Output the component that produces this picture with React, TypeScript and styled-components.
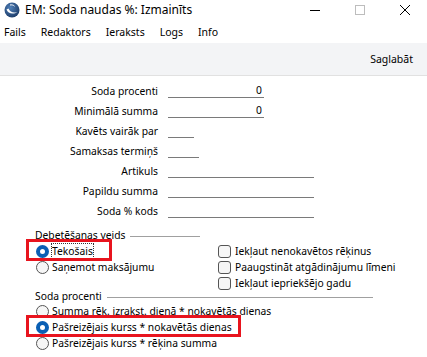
import React from "react";
import styled, { createGlobalStyle } from "styled-components";

const GlobalStyle = createGlobalStyle`
  html, body {
    margin: 0;
    padding: 0;
    background: #ffffff;
  }
  body {
    font-family: "Noto Sans", "Liberation Sans", sans-serif;
    font-size: 10.3px;
    line-height: 14px;
    color: #000000;
  }
`;

const Window = styled.div`
  width: 427px;
  height: 357px;
  overflow: hidden;
  background: #ffffff;
  display: flex;
  flex-direction: column;
`;

const TitleBar = styled.div`
  height: 20px;
  display: flex;
  align-items: center;
  padding-left: 4px;
`;

const Title = styled.span`
  margin-left: 5px;
  font-size: 12px;
  flex: 1;
`;

const WinButton = styled.div`
  width: 45px;
  height: 20px;
  display: flex;
  align-items: center;
  justify-content: center;
`;

const MenuBar = styled.div`
  height: 23px;
  display: flex;
  align-items: center;
  gap: 15px;
  padding-left: 4px;
`;

const MenuItem = styled.span`
  font-size: 10.5px;
`;

const Toolbar = styled.div`
  height: 32px;
  background: #f3f4f6;
  border-bottom: 1px solid #e1e1e1;
  display: flex;
  align-items: center;
  justify-content: flex-end;
  padding-right: 14px;
  font-size: 10.5px;
`;

const Form = styled.div`
  padding-top: 5px;
  display: grid;
  grid-template-columns: 158px auto;
  column-gap: 10px;
  grid-auto-rows: 20px;
  align-items: center;
`;

const Label = styled.span`
  text-align: right;
`;

const Field = styled.div<{ $w: number }>`
  width: ${(p) => p.$w}px;
  height: 14px;
  border-bottom: 1px solid #7a7a7a;
  text-align: right;
  padding-right: 2px;
  box-sizing: border-box;
  line-height: 13px;
`;

const Group = styled.div`
  padding-left: 35px;
  margin-top: 6px;
`;

const GroupHead = styled.div<{ $line: number; $h: number }>`
  display: flex;
  align-items: center;
  height: ${(p) => p.$h}px;
  line-height: ${(p) => p.$h}px;
  &::after {
    content: "";
    width: ${(p) => p.$line}px;
    margin-left: 5px;
    margin-top: 3px;
    border-top: 1px solid #a0a0a0;
  }
`;

const Columns = styled.div`
  display: flex;
`;

const Column = styled.div<{ $w?: number; $top?: number }>`
  display: flex;
  flex-direction: column;
  width: ${(p) => (p.$w ? `${p.$w}px` : "auto")};
  padding-top: ${(p) => p.$top ?? 0}px;
`;

const OptionRow = styled.div`
  height: 16px;
  display: flex;
  align-items: center;
  gap: 3px;
  white-space: nowrap;
`;

const Marked = styled.span<{ $w: number }>`
  position: relative;
  line-height: 14px;
  &::after {
    content: "";
    position: absolute;
    left: -26px;
    top: -5px;
    width: ${(p) => p.$w}px;
    height: 22px;
    border: 3px solid #e8141e;
    box-sizing: border-box;
    pointer-events: none;
  }
`;

const Radio = styled.span<{ $on?: boolean }>`
  width: 13px;
  height: 13px;
  margin-left: 1px;
  border-radius: 50%;
  box-sizing: border-box;
  flex: none;
  background: ${(p) => (p.$on ? "#ffffff" : "#f6f6f6")};
  border: ${(p) => (p.$on ? "4px solid #0a5fb4" : "1px solid #555555")};
`;

const Check = styled.span`
  width: 13px;
  height: 13px;
  border-radius: 3px;
  box-sizing: border-box;
  flex: none;
  background: #f6f6f6;
  border: 1px solid #555555;
  margin-right: 1px;
`;

const Focus = styled.span`
  outline: 1px dotted #333333;
  outline-offset: 0px;
`;

const Logo = () => (
  <svg width="16" height="16" viewBox="0 0 16 16">
    <defs>
      <radialGradient id="lg" cx="0.4" cy="0.35" r="0.7">
        <stop offset="0" stopColor="#4f7fb8" />
        <stop offset="1" stopColor="#1b3a66" />
      </radialGradient>
    </defs>
    <circle cx="8" cy="8" r="7.5" fill="url(#lg)" />
    <path d="M2.5 7.5 C4 11.5 9 13 13.5 10 C10 11.2 6 10.5 4.5 6.5 Z" fill="#ffffff" />
    <path d="M6 3 C7.5 2.6 9.5 3 10.5 4.2" stroke="#ffffff" strokeWidth="1" fill="none" />
  </svg>
);

const App: React.FC = () => {
  return (
    <Window>
      <GlobalStyle />
      <TitleBar>
        <Logo />
        <Title>EM: Soda naudas %: Izmainīts</Title>
        <WinButton>
          <svg width="10" height="10" viewBox="0 0 10 10">
            <line x1="0" y1="5.5" x2="10" y2="5.5" stroke="#000" strokeWidth="1" />
          </svg>
        </WinButton>
        <WinButton>
          <svg width="10" height="10" viewBox="0 0 10 10">
            <rect x="0.5" y="0.5" width="9" height="9" fill="none" stroke="#bdbdbd" strokeWidth="1" />
          </svg>
        </WinButton>
        <WinButton>
          <svg width="10" height="10" viewBox="0 0 10 10">
            <path d="M0 0 L10 10 M10 0 L0 10" stroke="#000" strokeWidth="1" />
          </svg>
        </WinButton>
      </TitleBar>
      <MenuBar>
        <MenuItem>Fails</MenuItem>
        <MenuItem>Redaktors</MenuItem>
        <MenuItem>Ieraksts</MenuItem>
        <MenuItem>Logs</MenuItem>
        <MenuItem>Info</MenuItem>
      </MenuBar>
      <Toolbar>Saglabāt</Toolbar>
      <Form>
        <Label>Soda procenti</Label>
        <Field $w={96}>0</Field>
        <Label>Minimālā summa</Label>
        <Field $w={96}>0</Field>
        <Label>Kavēts vairāk par</Label>
        <Field $w={26} />
        <Label>Samaksas termiņš</Label>
        <Field $w={31} />
        <Label>Artikuls</Label>
        <Field $w={146} />
        <Label>Papildu summa</Label>
        <Field $w={146} />
        <Label>Soda % kods</Label>
        <Field $w={146} />
      </Form>
      <Group>
        <GroupHead $line={70} $h={16}>Debetēšanas veids</GroupHead>
        <Columns>
          <Column $w={183}>
            <OptionRow>
              <Radio $on />
              <Marked $w={86}>
                <Focus>Tekošais</Focus>
              </Marked>
            </OptionRow>
            <OptionRow>
              <Radio />
              Saņemot maksājumu
            </OptionRow>
          </Column>
          <Column>
            <OptionRow>
              <Check />
              Iekļaut nenokavētos rēķinus
            </OptionRow>
            <OptionRow>
              <Check />
              Paaugstināt atgādinājumu līmeni
            </OptionRow>
            <OptionRow>
              <Check />
              Iekļaut iepriekšējo gadu
            </OptionRow>
          </Column>
        </Columns>
        <GroupHead $line={266} $h={10}>Soda procenti</GroupHead>
        <Column $top={2}>
          <OptionRow>
            <Radio />
            Summa rēk. izrakst. dienā * nokavētās dienas
          </OptionRow>
          <OptionRow>
            <Radio $on />
            <Marked $w={215}>Pašreizējais kurss * nokavētās dienas</Marked>
          </OptionRow>
          <OptionRow>
            <Radio />
            Pašreizējais kurss * rēķina summa
          </OptionRow>
        </Column>
      </Group>
    </Window>
  );
};

export default App;
